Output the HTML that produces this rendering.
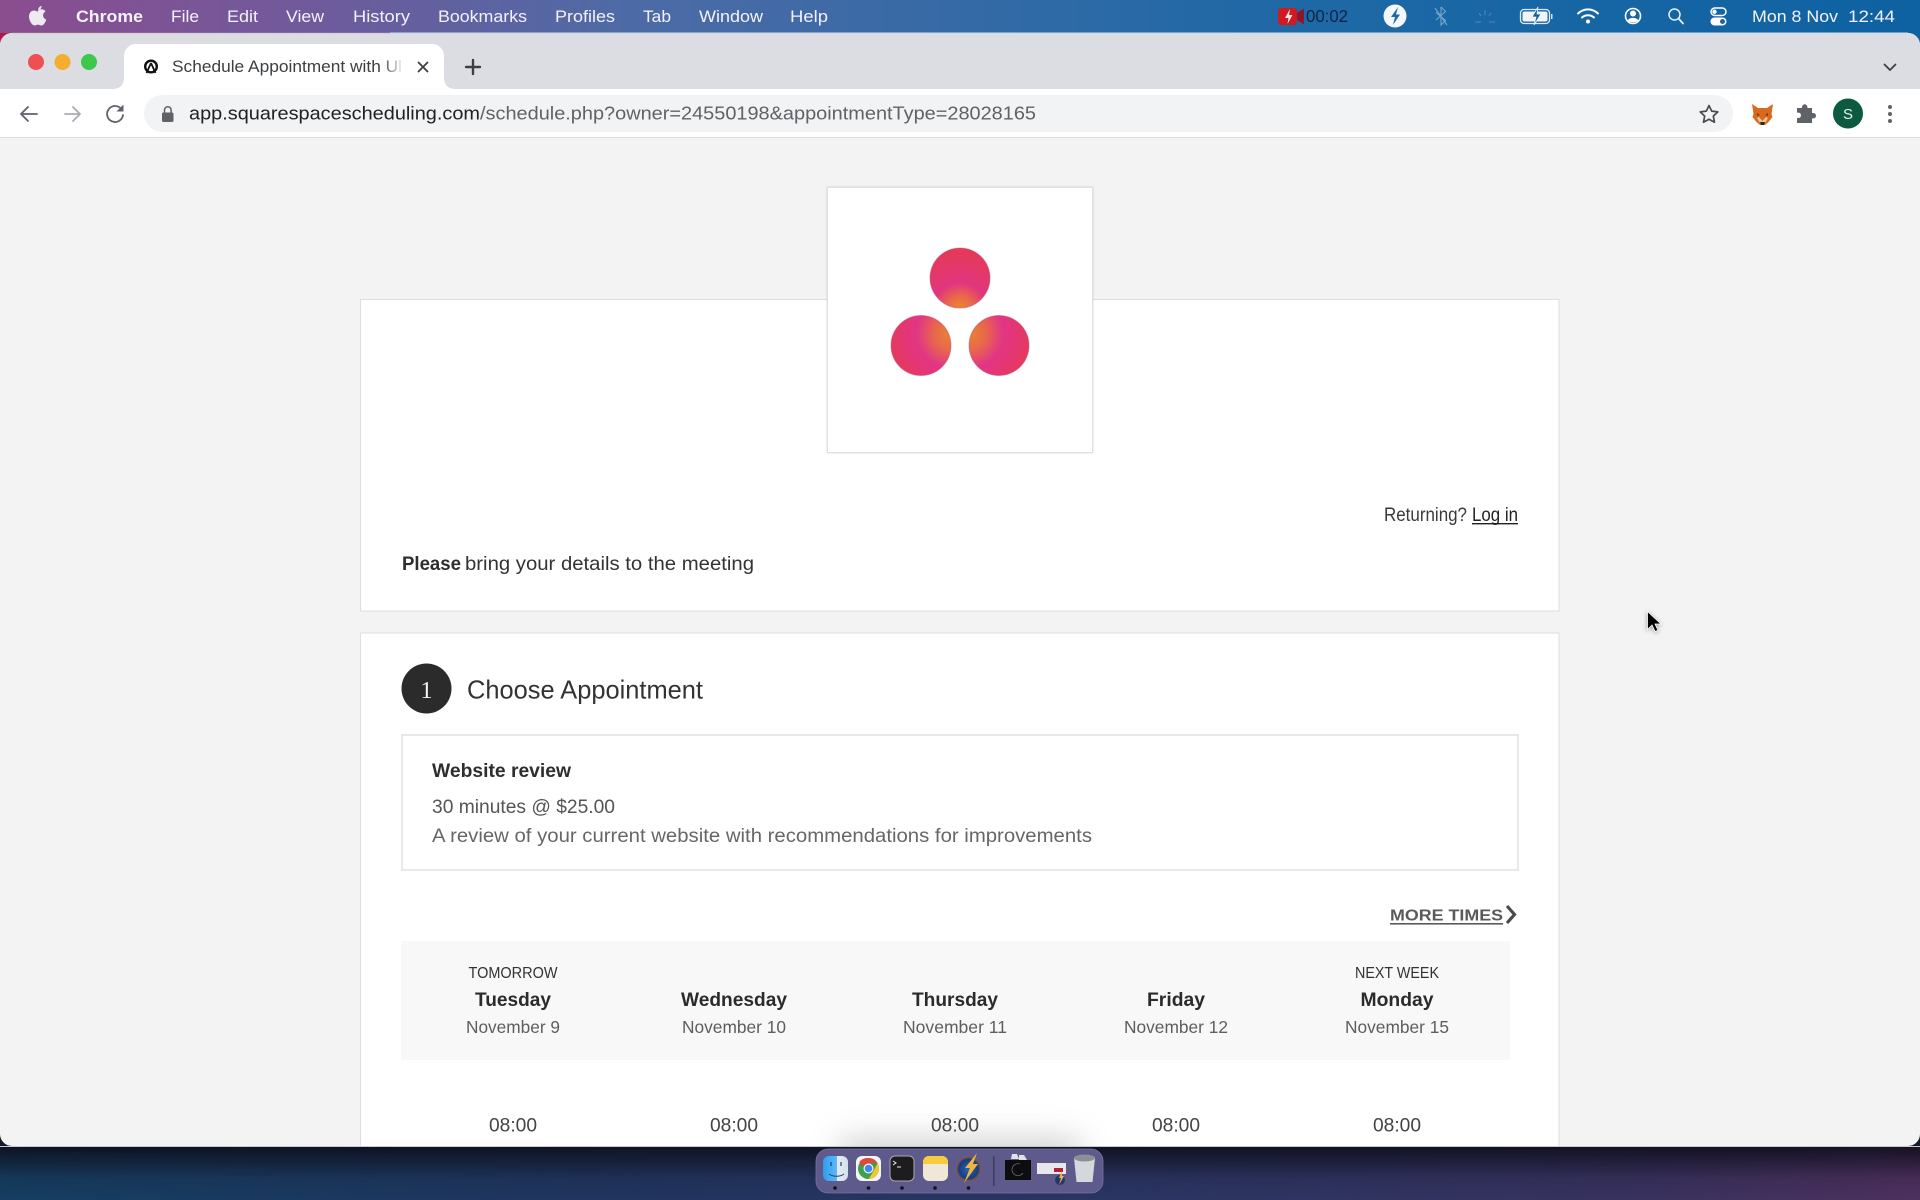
<!DOCTYPE html>
<html lang="en">
<head>
<meta charset="utf-8">
<title>Schedule Appointment</title>
<style>
html,body{margin:0;padding:0;background:#1a2f55;width:1920px;height:1200px;overflow:hidden}
svg{display:block;position:absolute;left:0;top:0}
text{font-family:"Liberation Sans",Arial,sans-serif}
.m{font-size:17px;fill:#f4f2f8}
.d{font-size:15.5px;fill:#333;text-anchor:start}
.w{font-size:19.5px;font-weight:bold;fill:#2b2b2b}
.n{font-size:17.5px;fill:#5e5e5e}
.t{font-size:19px;fill:#444}
.p{font-size:19.5px;fill:#333}
</style>
</head>
<body>
<svg width="1920" height="1200" viewBox="0 0 1920 1200" xmlns="http://www.w3.org/2000/svg">
<defs>
<linearGradient id="mb" x1="0" x2="1" y1="0" y2="0">
<stop offset="0" stop-color="#8a4d8e"/><stop offset=".16" stop-color="#705a9c"/><stop offset=".33" stop-color="#4d6ba6"/><stop offset=".65" stop-color="#2069a6"/><stop offset="1" stop-color="#0e62a2"/>
</linearGradient>
<linearGradient id="wp" x1="0" x2="1" y1="0" y2="0">
<stop offset="0" stop-color="#153e62"/><stop offset=".3" stop-color="#20355f"/><stop offset=".6" stop-color="#2b3563"/><stop offset=".85" stop-color="#38325f"/><stop offset="1" stop-color="#4e305e"/>
</linearGradient>
<linearGradient id="wpd" x1="0" x2="0" y1="0" y2="1">
<stop offset="0" stop-color="#0c0c18" stop-opacity=".85"/><stop offset=".6" stop-color="#0c0c18" stop-opacity=".12"/><stop offset="1" stop-color="#0c0c18" stop-opacity="0"/>
</linearGradient>
<linearGradient id="fade" x1="0" x2="1" y1="0" y2="0">
<stop offset="0" stop-color="#fff" stop-opacity="0"/><stop offset="1" stop-color="#fff"/>
</linearGradient>
<radialGradient id="a1" cx=".5" cy="1.02" r="1.05">
<stop offset="0" stop-color="#f0862c"/><stop offset=".2" stop-color="#ea6a48"/><stop offset=".42" stop-color="#e2357f"/><stop offset="1" stop-color="#e63a52"/>
</radialGradient>
<radialGradient id="a2" cx="1" cy=".3" r="1.15">
<stop offset="0" stop-color="#e98430"/><stop offset=".24" stop-color="#e8684a"/><stop offset=".5" stop-color="#e23585"/><stop offset="1" stop-color="#e63a52"/>
</radialGradient>
<radialGradient id="a3" cx="0" cy=".3" r="1.15">
<stop offset="0" stop-color="#e98430"/><stop offset=".24" stop-color="#e8684a"/><stop offset=".5" stop-color="#e23585"/><stop offset="1" stop-color="#e63a52"/>
</radialGradient>
<filter id="blur" x="-40%" y="-250%" width="180%" height="600%"><feGaussianBlur stdDeviation="16"/></filter>
<linearGradient id="finder" x1="0" x2="1" y1="0" y2="0">
<stop offset="0" stop-color="#2f9df0"/><stop offset=".55" stop-color="#5cb8f5"/><stop offset=".56" stop-color="#e4ecf5"/><stop offset="1" stop-color="#d4dfea"/>
</linearGradient>
<radialGradient id="bolt" cx=".5" cy=".5" r=".55">
<stop offset="0" stop-color="#2a66b8"/><stop offset=".7" stop-color="#153d80"/><stop offset="1" stop-color="#d8632a"/>
</radialGradient>
<clipPath id="tabc"><rect x="124" y="44" width="282" height="46"/></clipPath>
</defs>

<!-- wallpaper -->
<rect x="0" y="0" width="1920" height="60" fill="url(#mb)"/>
<rect x="0" y="33" width="400" height="30" fill="#b3164f"/>
<rect x="0" y="1140" width="1920" height="60" fill="url(#wp)"/>
<rect x="0" y="1146" width="1920" height="54" fill="url(#wpd)"/>

<!-- menu bar -->
<rect x="0" y="0" width="1920" height="33" fill="url(#mb)"/>
<g fill="#eeeaf2">
<path d="M41.500 6c-2 .3-3.500 2-3.300 4 2 0 3.500-2 3.300-4z"/>
<path d="M38 11.500c-1.500 0-2.500-1-4-1-2.500 0-5 2-5 6 0 4 3 9 5.500 9 1.300 0 2-.9 3.500-.9 1.500 0 2.100.9 3.500.9 2 0 4-3.500 4.800-5.800-2-.8-3.200-2.500-3.200-4.400 0-1.800 1-3 2.500-3.900-1-1.500-2.700-2.200-4.200-2.200-1.500 0-2.400 1-3.400 1z"/>
</g>
<text x="76" y="22" class="m" font-weight="bold" textLength="67" lengthAdjust="spacingAndGlyphs">Chrome</text>
<text x="171" y="22" class="m" textLength="28" lengthAdjust="spacingAndGlyphs">File</text>
<text x="227" y="22" class="m" textLength="31" lengthAdjust="spacingAndGlyphs">Edit</text>
<text x="286" y="22" class="m" textLength="38" lengthAdjust="spacingAndGlyphs">View</text>
<text x="353" y="22" class="m" textLength="57" lengthAdjust="spacingAndGlyphs">History</text>
<text x="438" y="22" class="m" textLength="89" lengthAdjust="spacingAndGlyphs">Bookmarks</text>
<text x="555" y="22" class="m" textLength="60" lengthAdjust="spacingAndGlyphs">Profiles</text>
<text x="643" y="22" class="m" textLength="28" lengthAdjust="spacingAndGlyphs">Tab</text>
<text x="699" y="22" class="m" textLength="64" lengthAdjust="spacingAndGlyphs">Window</text>
<text x="790" y="22" class="m" textLength="38" lengthAdjust="spacingAndGlyphs">Help</text>

<!-- status items -->
<rect x="1278" y="8" width="19" height="17" rx="3" fill="#cf1a22"/>
<path d="M1297 13l7-4.500v16l-7-4.500z" fill="#8e1430"/>
<path d="M1290 9l-5 9h3.500l-1 6 5-9h-3.500z" fill="#f6e6e6"/>
<text x="1306" y="22" font-size="17.500" fill="#0f2444" textLength="42" lengthAdjust="spacingAndGlyphs">00:02</text>
<circle cx="1395" cy="16" r="11.500" fill="#f5f8fb"/>
<path d="M1398 7l-7 10h4l-2 8 7-10.500h-4z" fill="#1a6aa8"/>
<path d="M1435 8l12 17M1441 7v18l4.500-4.500-9.500-8M1441 7l4.500 4.500-9.500 8.500" fill="none" stroke="#a8c8de" stroke-width="1.100" opacity=".65"/>
<g stroke="#7fb0d2" stroke-width="1.200" opacity=".4" fill="none"><path d="M1475 22h6M1489 22h6M1485 10v5M1479 13l2 3M1491 13l-2 3"/></g>
<rect x="1520.500" y="9.500" width="29" height="14" rx="3.500" fill="none" stroke="#dfeaf3" stroke-width="1.300"/>
<rect x="1522.500" y="11.500" width="25" height="10" rx="2" fill="#eef4f8"/>
<rect x="1551" y="14" width="1.500" height="5" fill="#cfe0ec"/>
<path d="M1538 7l-6 10h4l-2 8 7-11h-4z" fill="#14609e" stroke="#eef4f8" stroke-width=".8"/>
<g fill="none" stroke="#fff" stroke-width="2" stroke-linecap="round"><path d="M1578 13.500c6-5.500 14-5.500 20 0"/><path d="M1582 17.500c3.500-3 8.500-3 12 0"/></g>
<circle cx="1588" cy="21.500" r="2" fill="#fff"/>
<circle cx="1633" cy="16" r="7.500" fill="none" stroke="#fff" stroke-width="1.600"/>
<circle cx="1633" cy="13.500" r="3" fill="#fff"/>
<path d="M1627.500 20.500c2-3.500 9-3.500 11 0-3 2.500-8 2.500-11 0z" fill="#fff"/>
<circle cx="1674.500" cy="14.500" r="5.500" fill="none" stroke="#e8eff5" stroke-width="1.500"/>
<path d="M1678.500 18.500l4.500 5" stroke="#e8eff5" stroke-width="1.800" stroke-linecap="round"/>
<rect x="1711" y="8" width="15" height="7.500" rx="3.750" fill="none" stroke="#fff" stroke-width="1.500"/>
<circle cx="1714.500" cy="11.750" r="2.200" fill="#fff"/>
<rect x="1710.500" y="17.500" width="16" height="8" rx="4" fill="#fff"/>
<circle cx="1722.500" cy="21.500" r="2.500" fill="#1766a4"/>
<text x="1752" y="22" class="m" textLength="86" lengthAdjust="spacingAndGlyphs">Mon 8 Nov</text>
<text x="1848" y="22" class="m" textLength="47" lengthAdjust="spacingAndGlyphs">12:44</text>

<!-- chrome window -->
<path d="M0 1146V45a12 12 0 0 1 12-12h1896a12 12 0 0 1 12 12v1101z" fill="#f3f3f3"/>
<path d="M0 89V45a12 12 0 0 1 12-12h1896a12 12 0 0 1 12 12v44z" fill="#dcdde2"/>
<path d="M12 33h378" stroke="#c9a0b8" stroke-width="1" opacity=".5"/>
<path d="M390 33h1518" stroke="#c6dcec" stroke-width="1"/>
<circle cx="36" cy="62" r="8" fill="#ee4f53"/>
<circle cx="62.500" cy="62" r="8" fill="#f4ae2f"/>
<circle cx="89" cy="62" r="8" fill="#3cc84a"/>
<path d="M112 89c8 0 12-4 12-12V56a12 12 0 0 1 12-12h296a12 12 0 0 1 12 12v21c0 8 4 12 12 12z" fill="#fff"/>
<circle cx="151" cy="66.500" r="5.800" fill="none" stroke="#111" stroke-width="2.400"/>
<path d="M151 63l-4.500 10M151 63l4.500 10" stroke="#111" stroke-width="1.800" fill="none"/>
<g clip-path="url(#tabc)"><text x="172" y="72" font-size="16.500" fill="#3c4043" textLength="230" lengthAdjust="spacingAndGlyphs">Schedule Appointment with Ul</text></g>
<rect x="382" y="50" width="22" height="32" fill="url(#fade)"/>
<path d="M418.500 62.500l9 9M427.500 62.500l-9 9" stroke="#3c4043" stroke-width="1.800" stroke-linecap="round"/>
<path d="M473 60v14M466 67h14" stroke="#3c4043" stroke-width="2.400" stroke-linecap="round"/>
<path d="M1884.500 64.500l5.500 5.500 5.500-5.500" fill="none" stroke="#3c4043" stroke-width="1.800" stroke-linecap="round"/>

<!-- toolbar -->
<rect x="0" y="89" width="1920" height="48" fill="#fff"/>
<rect x="0" y="137" width="1920" height="1" fill="#dcdcdf"/>
<g fill="none" stroke="#5f6368" stroke-width="1.800" stroke-linecap="round" stroke-linejoin="round">
<path d="M37 114H21M28 107l-7 7 7 7"/>
<path d="M65 114h15M73 107l7 7-7 7" stroke="#a9acb0"/>
<path d="M122 110a8 8 0 1 0 1 5"/>
</g>
<path d="M123.500 104.500v7h-7z" fill="#5f6368"/>
<rect x="144" y="95" width="1589" height="37" rx="18.500" fill="#f1f3f4"/>
<rect x="162" y="112.500" width="11.500" height="9.500" rx="1.500" fill="#5f6368"/>
<path d="M164.500 113v-3a3.300 3.300 0 0 1 6.600 0v3" fill="none" stroke="#5f6368" stroke-width="1.500"/>
<text x="189" y="119.500" font-size="18" fill="#202124" textLength="291" lengthAdjust="spacingAndGlyphs">app.squarespacescheduling.com</text>
<text x="480" y="119.500" font-size="18" fill="#5f6368" textLength="556" lengthAdjust="spacingAndGlyphs">/schedule.php?owner=24550198&amp;appointmentType=28028165</text>
<path d="M1709 105.500l2.700 5.600 6.100.8-4.500 4.200 1.200 6.100-5.500-3-5.500 3 1.200-6.100-4.500-4.200 6.100-.8z" fill="none" stroke="#4a4d50" stroke-width="1.700" stroke-linejoin="round"/>
<!-- fox -->
<path d="M1752 104l6 4h9l6-4-1.500 10 1 3-4 5-3.500 3h-5l-3.500-3-4-5 1-3z" fill="#d9691c"/>
<path d="M1759 117l3.500 4 3.500-4 2 1-3 5h-5l-3-5z" fill="#e8c8a0"/>
<path d="M1760 122h5l-1 3h-3z" fill="#3a2a1e"/>
<path d="M1757 113l3 2-3 1zM1768 113l-3 2 3 1z" fill="#7a3e10"/>
<!-- puzzle -->
<path d="M1797 108h5v-1a2.700 2.700 0 0 1 5.400 0v1h4.600v5h1.300a2.700 2.700 0 0 1 0 5.400H1812V123h-15v-5h1.300a2.700 2.700 0 0 0 0-5.400H1797z" fill="#5f6368"/>
<circle cx="1848" cy="113.500" r="15" fill="#0c5b40"/>
<text x="1848" y="119" font-size="15" fill="#e8f2ee" text-anchor="middle">S</text>
<circle cx="1890" cy="107" r="2" fill="#5f6368"/><circle cx="1890" cy="114" r="2" fill="#5f6368"/><circle cx="1890" cy="121" r="2" fill="#5f6368"/>

<!-- page -->
<rect x="0" y="138" width="1920" height="1008" fill="#f3f3f3"/>
<path d="M0 1134v12h12a12 12 0 0 1-12-12zM1920 1134v12h-12a12 12 0 0 0 12-12z" fill="#131a2c"/>

<!-- card 1 -->
<rect x="360.500" y="299.500" width="1198.500" height="311.500" fill="#fff" stroke="#dedede"/>
<rect x="827.500" y="187.500" width="265" height="265" fill="#fff" stroke="#e0e0e0" style="filter:drop-shadow(0 0 1px rgba(0,0,0,.15))"/>
<circle cx="960" cy="278" r="30" fill="url(#a1)" stroke="#b84a78" stroke-opacity=".45" stroke-width="1"/>
<circle cx="921" cy="345.500" r="30" fill="url(#a2)" stroke="#b84a78" stroke-opacity=".45" stroke-width="1"/>
<circle cx="999" cy="345.500" r="30" fill="url(#a3)" stroke="#b84a78" stroke-opacity=".45" stroke-width="1"/>
<text x="1384" y="521" font-size="19" fill="#3a3a3a" textLength="83" lengthAdjust="spacingAndGlyphs">Returning?</text>
<text x="1472" y="521" font-size="19" fill="#222" textLength="46" lengthAdjust="spacingAndGlyphs">Log in</text>
<rect x="1472" y="523" width="46" height="1.400" fill="#222"/>
<text x="402" y="570" font-size="19.500" font-weight="bold" fill="#2e2e2e" textLength="59" lengthAdjust="spacingAndGlyphs">Please</text>
<text x="465" y="570" class="p" textLength="289" lengthAdjust="spacingAndGlyphs">bring your details to the meeting</text>

<!-- card 2 -->
<rect x="360.500" y="633" width="1198.500" height="520" fill="#fff" stroke="#dedede"/>
<circle cx="426.500" cy="688.500" r="25" fill="#2b2b2b"/>
<text x="426.500" y="698" font-size="24" fill="#f4f4f4" text-anchor="middle" style="font-family:'Liberation Serif',serif">1</text>
<text x="467" y="698.500" font-size="26" fill="#333" textLength="236" lengthAdjust="spacingAndGlyphs">Choose Appointment</text>
<rect x="402" y="735" width="1116" height="135" fill="#fff" stroke="#e8e8e8" stroke-width="2"/>
<text x="432" y="777" font-size="19.500" font-weight="bold" fill="#2e2e2e" textLength="139" lengthAdjust="spacingAndGlyphs">Website review</text>
<text x="432" y="813" font-size="19" fill="#555" textLength="183" lengthAdjust="spacingAndGlyphs">30 minutes @ $25.00</text>
<text x="432" y="842" font-size="19" fill="#666" textLength="660" lengthAdjust="spacingAndGlyphs">A review of your current website with recommendations for improvements</text>

<text x="1390" y="920.500" font-size="16" font-weight="bold" fill="#5a5a5a" textLength="113" lengthAdjust="spacingAndGlyphs">MORE TIMES</text>
<rect x="1390" y="923" width="113" height="1.600" fill="#5a5a5a"/>
<path d="M1507 906l7.500 8.500-7.500 8.500" fill="none" stroke="#4a4a4a" stroke-width="3.200"/>

<rect x="401" y="941" width="1109" height="119" fill="#f8f8f8"/>
<text x="468.500" y="978" class="d" textLength="89" lengthAdjust="spacingAndGlyphs">TOMORROW</text>
<text x="1355" y="978" class="d" textLength="84" lengthAdjust="spacingAndGlyphs">NEXT WEEK</text>

<text x="475" y="1006" class="w" textLength="76" lengthAdjust="spacingAndGlyphs">Tuesday</text>
<text x="681" y="1006" class="w" textLength="106" lengthAdjust="spacingAndGlyphs">Wednesday</text>
<text x="912" y="1006" class="w" textLength="86" lengthAdjust="spacingAndGlyphs">Thursday</text>
<text x="1147" y="1006" class="w" textLength="58" lengthAdjust="spacingAndGlyphs">Friday</text>
<text x="1360.500" y="1006" class="w" textLength="73" lengthAdjust="spacingAndGlyphs">Monday</text>

<text x="466" y="1033" class="n" textLength="94" lengthAdjust="spacingAndGlyphs">November 9</text>
<text x="682" y="1033" class="n" textLength="104" lengthAdjust="spacingAndGlyphs">November 10</text>
<text x="903" y="1033" class="n" textLength="104" lengthAdjust="spacingAndGlyphs">November 11</text>
<text x="1124" y="1033" class="n" textLength="104" lengthAdjust="spacingAndGlyphs">November 12</text>
<text x="1345" y="1033" class="n" textLength="104" lengthAdjust="spacingAndGlyphs">November 15</text>

<!-- dock shadow over window -->
<rect x="840" y="1140" width="240" height="30" fill="#777" opacity=".38" filter="url(#blur)"/>

<text x="489" y="1131.500" class="t" textLength="48" lengthAdjust="spacingAndGlyphs">08:00</text>
<text x="710" y="1131.500" class="t" textLength="48" lengthAdjust="spacingAndGlyphs">08:00</text>
<text x="931" y="1131.500" class="t" textLength="48" lengthAdjust="spacingAndGlyphs">08:00</text>
<text x="1152" y="1131.500" class="t" textLength="48" lengthAdjust="spacingAndGlyphs">08:00</text>
<text x="1373" y="1131.500" class="t" textLength="48" lengthAdjust="spacingAndGlyphs">08:00</text>

<rect x="0" y="1146" width="1920" height="1" fill="#c8c8d4"/>
<rect x="0" y="1147" width="1920" height="53" fill="url(#wp)"/>
<rect x="0" y="1147" width="1920" height="53" fill="url(#wpd)"/>

<!-- dock -->
<rect x="816" y="1149" width="287" height="44" rx="12" fill="#5e5a8c" stroke="#77749e" stroke-width=".8"/>
<rect x="823" y="1156" width="25" height="25" rx="6" fill="url(#finder)"/>
<path d="M829 1174c4 3 11 3 15 0" fill="none" stroke="#20406e" stroke-width="1"/>
<path d="M831 1162v4M841 1162v4" stroke="#20406e" stroke-width="1.200"/>
<rect x="856" y="1156" width="25" height="25" rx="6" fill="#f4f4f4"/>
<circle cx="868.500" cy="1168.500" r="10.500" fill="#3aa14c"/>
<path d="M868.500 1158a10.500 10.500 0 0 1 9.100 5.250h-9.100l-7.400 3-1.700-4.500a10.500 10.500 0 0 1 9.100-3.750z" fill="#e0463a"/>
<path d="M877.600 1163.250a10.500 10.500 0 0 1-9.100 15.750l4.500-7z" fill="#f4c531"/>
<circle cx="868.500" cy="1168.500" r="5" fill="#f4f4f4"/><circle cx="868.500" cy="1168.500" r="3.800" fill="#4386f0"/>
<rect x="890" y="1156" width="24" height="25" rx="5" fill="#1d1d1f" stroke="#a8a8b0" stroke-width="1"/>
<path d="M893 1161l3 2-3 2M897 1167h4" stroke="#eee" stroke-width="1" fill="none"/>
<rect x="923" y="1156" width="25" height="25" rx="6" fill="#efe8d8"/>
<path d="M923 1164v-2a6 6 0 0 1 6-6h13a6 6 0 0 1 6 6v2z" fill="#f6cb3e"/>
<circle cx="968.500" cy="1169" r="12.500" fill="url(#bolt)"/>
<path d="M977 1153l-12 15h5l-6 15 14-19h-5z" fill="#f2b43a"/>
<rect x="993" y="1156" width="1.500" height="30" fill="#3e3b62"/>
<rect x="1005" y="1160" width="26" height="20" fill="#0d0d10"/>
<path d="M1012 1154h5l2 5h-8zM1019 1155h5l3 5h-8z" fill="#dfe2e8"/>
<path d="M1020 1164a6 6 0 1 0 3 9" fill="none" stroke="#666" stroke-width=".8"/>
<rect x="1037" y="1163" width="29" height="11" fill="#e8e8ec"/>
<rect x="1054" y="1168" width="9" height="4" fill="#b51f3a"/>
<circle cx="1060" cy="1180" r="5" fill="#22386a"/><path d="M1062 1171l-3 7h2l-2 7 5-9h-2z" fill="#f2b43a"/>
<path d="M1074 1158h21l-2.500 24h-16z" fill="#d4d8dc"/>
<ellipse cx="1084.500" cy="1158" rx="10.500" ry="3.500" fill="#8c8f94"/>
<g fill="#111122"><circle cx="835" cy="1188" r="1.800"/><circle cx="868.500" cy="1188" r="1.800"/><circle cx="902" cy="1188" r="1.800"/><circle cx="935" cy="1188" r="1.800"/><circle cx="968.500" cy="1188" r="1.800"/></g>

<!-- cursor -->
<path d="M1647.500 611.500v18l4.500-4.500 3.200 6.500 2.800-1.300-3-6.200h6z" fill="#000" stroke="#fff" stroke-width=".8" style="filter:drop-shadow(0 1px 2px rgba(0,0,0,.35))"/>
</svg>
</body>
</html>
